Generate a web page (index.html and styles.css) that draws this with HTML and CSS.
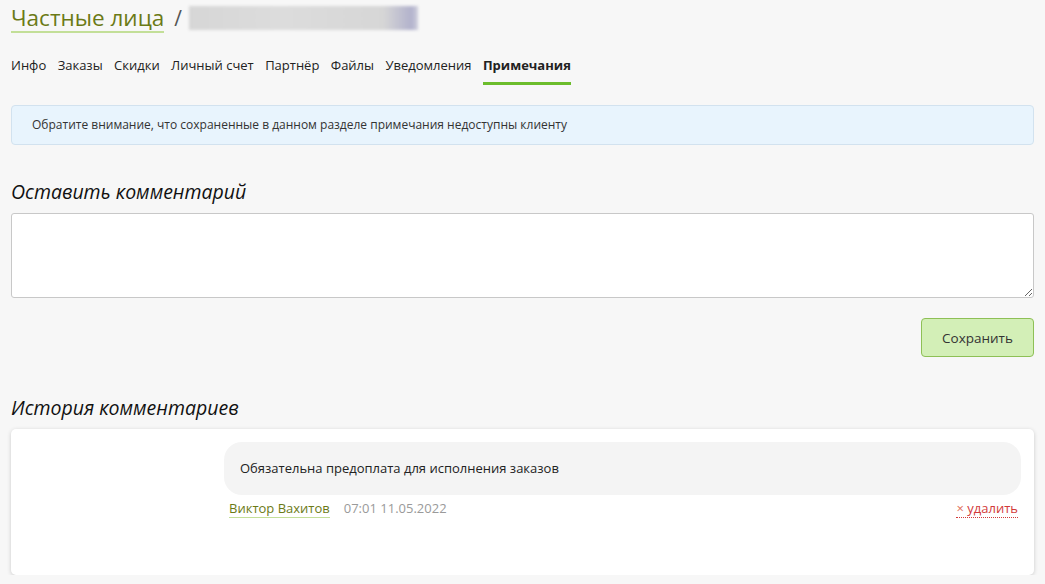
FILE: index.html
```html
<!DOCTYPE html>
<html lang="ru">
<head>
<meta charset="utf-8">
<title>Примечания</title>
<link rel="stylesheet" href="styles.css">
</head>
<body>
<div class="page">
  <div class="crumbs">
    <a class="crumb-link" href="#">Частные лица</a>
    <span class="crumb-sep">/</span>
    <span class="crumb-blur"></span>
  </div>
  <nav class="tabs">
    <a class="tab" href="#">Инфо</a>
    <a class="tab" href="#">Заказы</a>
    <a class="tab" href="#">Скидки</a>
    <a class="tab" href="#">Личный счет</a>
    <a class="tab" href="#">Партнёр</a>
    <a class="tab" href="#">Файлы</a>
    <a class="tab" href="#">Уведомления</a>
    <a class="tab active" href="#">Примечания</a>
  </nav>
  <div class="notice">Обратите внимание, что сохраненные в данном разделе примечания недоступны клиенту</div>
  <h2 class="section-title">Оставить комментарий</h2>
  <textarea class="comment-input"></textarea>
  <div class="actions">
    <button class="btn-save" type="button">Сохранить</button>
  </div>
  <h2 class="section-title history-title">История комментариев</h2>
  <div class="history-card">
    <div class="comment">
      <div class="bubble">Обязательна предоплата для исполнения заказов</div>
      <div class="meta">
        <a class="author" href="#">Виктор Вахитов</a>
        <span class="date">07:01 11.05.2022</span>
        <a class="delete" href="#"><span class="x">×</span> удалить</a>
      </div>
    </div>
  </div>
</div>
</body>
</html>
```
FILE: styles.css
```css
* { box-sizing: border-box; }
html, body { margin: 0; padding: 0; }
body {
  background: #f7f7f7;
  font-family: "Open Sans", "Noto Sans", sans-serif;
  color: #222;
}
.page {
  padding: 0 11px 0 11px;
}
.crumbs {
  display: flex;
  align-items: center;
  height: 36px;
}
.crumb-link {
  font-size: 22.5px;
  color: #6b7a16;
  text-decoration: none;
  border-bottom: 2px solid #c3df98;
  line-height: 27px;
  margin-top: 1px;
}
.crumb-sep {
  font-size: 21px;
  color: #555;
  margin: 0 7px 0 10px;
  line-height: 27px;
}
.crumb-blur {
  display: block;
  width: 229px;
  height: 24px;
  margin-top: -1px;
  background: linear-gradient(90deg, #d6d6d6 0%, #dcdcdc 40%, #d6d6d6 85%, #b2b2cc 97%, #cfcfdc 100%);
  filter: blur(1.5px);
}
.tabs {
  display: flex;
  gap: 11.4px;
  margin-top: 16px;
  height: 33px;
}
.tab {
  font-size: 13px;
  color: #222;
  text-decoration: none;
  line-height: 27px;
  height: 33px;
  white-space: nowrap;
}
.tab.active {
  font-weight: 700;
  border-bottom: 3px solid #6cbd2c;
}
.notice {
  margin-top: 20px;
  height: 40px;
  background: #e8f4fd;
  border: 1px solid #d2e2ef;
  border-radius: 4px;
  padding: 0 20px;
  font-size: 12px;
  color: #333;
  line-height: 38px;
}
.section-title {
  margin: 34px 0 0 0;
  font-weight: 400;
  font-style: italic;
  font-size: 19.5px;
  color: #111;
  line-height: 25px;
}
.comment-input {
  display: block;
  width: 100%;
  height: 85px;
  margin-top: 9px;
  border: 1px solid #c8c8c8;
  border-radius: 3px;
  background: #fff;
  resize: vertical;
  font-family: inherit;
}
.actions {
  display: flex;
  justify-content: flex-end;
  margin-top: 20px;
}
.btn-save {
  width: 113px;
  height: 39px;
  background: #d3efb7;
  border: 1px solid #8ec056;
  border-radius: 4px;
  font-family: inherit;
  font-size: 13.5px;
  color: #333;
  cursor: pointer;
}
.history-title {
  margin-top: 38px;
}
.history-card {
  margin-top: 9px;
  height: 146px;
  background: #fff;
  border-radius: 5px;
  box-shadow: 0 1px 4px rgba(0,0,0,0.18);
  padding: 13px 13px 0 213px;
}
.bubble {
  background: #f4f4f4;
  border-radius: 18px;
  height: 53px;
  padding: 0 16px;
  font-size: 13px;
  color: #222;
  line-height: 53px;
}
.meta {
  display: flex;
  align-items: baseline;
  padding: 4px 3px 0 5px;
  font-size: 13px;
}
.author {
  color: #6b7a16;
  text-decoration: none;
  border-bottom: 1px solid #c3df98;
  line-height: 18px;
}
.date {
  color: #9a9a9a;
  margin-left: 14px;
}
.delete {
  margin-left: auto;
  color: #d23a3a;
  text-decoration: none;
  border-bottom: 1px dotted #d23a3a;
  line-height: 18px;
}
.delete .x {
  color: #e0705a;
}
```
